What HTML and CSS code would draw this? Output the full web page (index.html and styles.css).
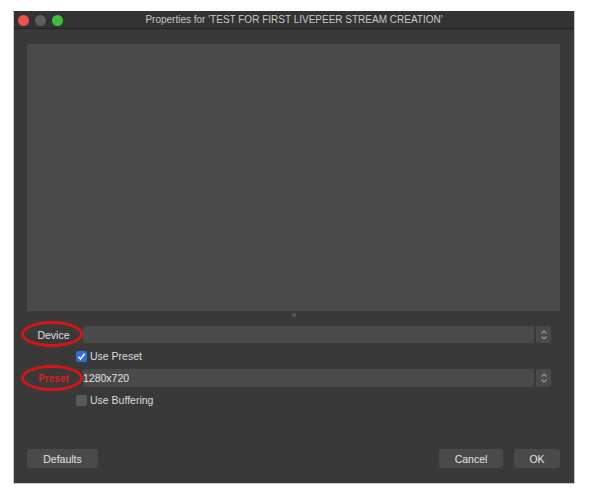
FILE: index.html
```html
<!DOCTYPE html>
<html>
<head>
<meta charset="utf-8">
<link rel="stylesheet" href="styles.css">
</head>
<body>
<div class="window">
  <div class="titlebar">
    <div class="lights">
      <span class="light red"></span>
      <span class="light gray"></span>
      <span class="light green"></span>
    </div>
    <div class="title">Properties for 'TEST FOR FIRST LIVEPEER STREAM CREATION'</div>
  </div>
  <div class="content">
    <div class="preview"></div>
    <div class="splitter"><span class="dot"></span></div>
    <div class="form">
      <div class="row">
        <div class="label"><span>Device</span><span class="ring"></span></div>
        <div class="field">
          <div class="combo"></div>
          <div class="spin"><svg width="8" height="12" viewBox="0 0 8 12"><path d="M1.5 4.5 L4 2 L6.5 4.5 M1.5 7.5 L4 10 L6.5 7.5" fill="none" stroke="#9a9a9a" stroke-width="1.2"/></svg></div>
        </div>
      </div>
      <div class="row check-row">
        <div class="label"></div>
        <div class="check"><span class="box on"><svg width="9" height="9" viewBox="0 0 9 9"><path d="M1.5 4.8 L3.6 7 L7.6 1.8" fill="none" stroke="#fff" stroke-width="1.6"/></svg></span>Use Preset</div>
      </div>
      <div class="row">
        <div class="label"><span class="red-text">Preset</span><span class="ring"></span></div>
        <div class="field">
          <div class="combo">1280x720</div>
          <div class="spin"><svg width="8" height="12" viewBox="0 0 8 12"><path d="M1.5 4.5 L4 2 L6.5 4.5 M1.5 7.5 L4 10 L6.5 7.5" fill="none" stroke="#9a9a9a" stroke-width="1.2"/></svg></div>
        </div>
      </div>
      <div class="row check-row">
        <div class="label"></div>
        <div class="check"><span class="box"></span>Use Buffering</div>
      </div>
    </div>
    <div class="buttons">
      <button class="btn defaults">Defaults</button>
      <div class="right">
        <button class="btn cancel">Cancel</button>
        <button class="btn ok">OK</button>
      </div>
    </div>
  </div>
</div>
</body>
</html>
```

FILE: styles.css
```css
* { box-sizing: border-box; }
html, body { margin: 0; background: #ffffff; }
body {
  padding: 11px 0 0 13px;
  font-family: "Liberation Sans", Arial, sans-serif;
}
.window {
  width: 562px;
  height: 473px;
  background: #393939;
  border: 1px solid #c9c9c9;
  border-top: none;
  display: flex;
  flex-direction: column;
}
.titlebar {
  height: 18px;
  background: #333333;
  border-bottom: 1px solid #222222;
  position: relative;
  display: flex;
  align-items: center;
  justify-content: center;
}
.lights {
  position: absolute;
  left: 4px;
  top: 4px;
  display: flex;
  gap: 6px;
}
.light { width: 11px; height: 11px; border-radius: 50%; display: block; }
.light.red { background: #ec5350; }
.light.gray { background: #5e5e5e; }
.light.green { background: #3ebd3f; }
.title {
  color: #c8c8c8;
  font-size: 10px;
}
.content {
  flex: 1;
  padding: 15px 14px 0 13px;
  display: flex;
  flex-direction: column;
}
.preview {
  height: 267px;
  background: #4a4a4a;
}
.splitter {
  height: 15px;
  display: flex;
  justify-content: center;
  align-items: flex-start;
  padding-top: 2px;
}
.dot { width: 4px; height: 4px; border-radius: 1px; background: #555555; display: block; }
.form { display: flex; flex-direction: column; }
.row { display: flex; align-items: center; height: 17px; }
.check-row { height: 26px; }
.row:nth-child(3) { height: 18px; }
.row:nth-child(3) .field { height: 18px; }
.row:nth-child(3) .combo { line-height: 18px; }
.label {
  width: 56px;
  flex: none;
  display: flex;
  justify-content: center;
  position: relative;
  color: #e0e0e0;
  font-size: 10.5px;
  padding-right: 3px;
}
.red-text { color: #dc1e1e; font-weight: bold; font-size: 10px; }
.ring {
  position: absolute;
  left: -6px;
  top: -8px;
  width: 62px;
  height: 26px;
  border: 3px solid #d71515;
  border-radius: 50%;
}
.field { flex: 1; display: flex; height: 17px; gap: 2px; margin-right: 9px; }
.combo {
  flex: 1;
  background: #4a4a4a;
  border-radius: 2px;
  color: #e2e2e2;
  font-size: 10.5px;
  padding-left: 0px;
  line-height: 17px;
}
.spin {
  width: 15px;
  background: #4a4a4a;
  border-radius: 2px;
  display: flex;
  align-items: center;
  justify-content: center;
}
.check {
  display: flex;
  align-items: center;
  color: #dcdcdc;
  font-size: 10.5px;
  margin-left: -7px;
}
.box {
  width: 11px;
  height: 11px;
  border-radius: 2px;
  background: #5a5a5a;
  margin-right: 3px;
  display: flex;
  align-items: center;
  justify-content: center;
}
.box.on { background: #2e6ee0; }
.buttons {
  margin-top: auto;
  margin-bottom: 15px;
  display: flex;
  justify-content: space-between;
}
.right { display: flex; gap: 11px; }
.btn {
  height: 19px;
  background: #4a4a4a;
  border: none;
  border-radius: 3px;
  color: #e4e4e4;
  font-family: "Liberation Sans", Arial, sans-serif;
  font-size: 10.5px;
  padding: 0;
}
.defaults { width: 71px; }
.cancel { width: 64px; }
.ok { width: 46px; }
```
